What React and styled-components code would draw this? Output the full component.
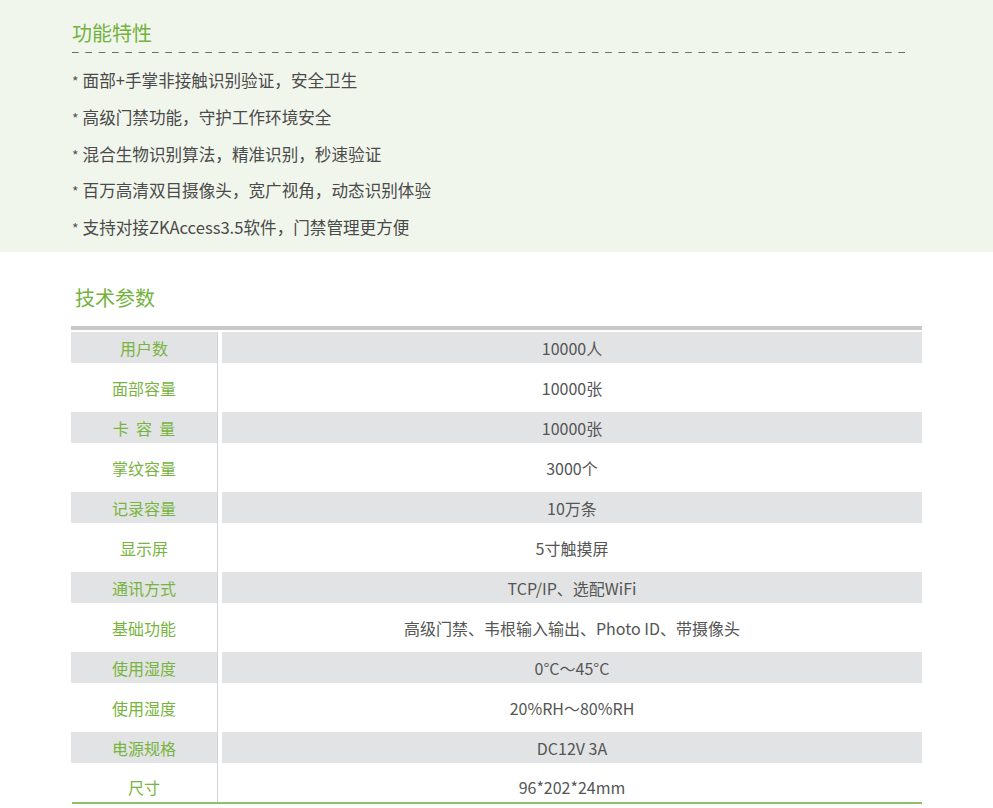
import React from "react";
import styled, { createGlobalStyle } from "styled-components";

const Global = createGlobalStyle`
  html, body { margin: 0; padding: 0; background: #ffffff; }
  body { font-family: "Noto Sans CJK SC", "Noto Sans", sans-serif; }
`;

const Page = styled.div`
  width: 993px;
  min-height: 808px;
  background: #fff;
`;

const Features = styled.section`
  background: #f1f6ec;
  height: 252px;
  box-sizing: border-box;
  padding: 20px 0 0 72px;
`;

const Title = styled.h2`
  margin: 0;
  font-size: 20px;
  line-height: 26px;
  font-weight: 400;
  color: #74b23e;
  padding-left: ${(p) => p.$indent || 0}px;
`;

const Dashed = styled.div`
  width: 835px;
  height: 1px;
  margin: 6px 0 9px;
  background-image: linear-gradient(to right, #555 7px, transparent 7px);
  background-size: 13.33px 1px;
  background-repeat: repeat-x;
  opacity: 0.85;
`;

const List = styled.ul`
  list-style: none;
  margin: 0;
  padding: 0;
`;

const Item = styled.li`
  font-size: 16.6px;
  height: 36.75px;
  line-height: 36.75px;
  color: #4a4a4a;
  white-space: nowrap;
`;

const Star = styled.span`
  font-size: 14px;
  line-height: 1;
  margin-right: 4px;
  color: #555;
`;

const Specs = styled.section`
  padding: 33px 0 0 71px;
`;

const Table = styled.div`
  width: 851px;
  margin-top: 15px;
  border-top: 4px solid #c8c8c8;
  padding-top: 2px;
`;

const Row = styled.div`
  display: grid;
  grid-template-columns: 146px 1px 4px 1fr;
  height: ${(p) => (p.$last ? 30 : 40)}px;
`;

const Cell = styled.div`
  height: ${(p) => (p.$last ? 30 : 31)}px;
  display: flex;
  align-items: center;
  justify-content: center;
  font-size: 16px;
  background: ${(p) => (p.$shade ? "#e2e3e4" : "transparent")};
  white-space: pre;
`;

const Label = styled(Cell)`
  color: #78b43f;
`;

const Value = styled(Cell)`
  grid-column: 4;
  color: #555;
`;

const Divider = styled.div`
  background: #d3d3d3;
  height: 100%;
`;

const BottomLine = styled.div`
  width: 850px;
  margin-left: 1px;
  height: 2px;
  background: #8dc268;
`;

const features = [
  "面部+手掌非接触识别验证，安全卫生",
  "高级门禁功能，守护工作环境安全",
  "混合生物识别算法，精准识别，秒速验证",
  "百万高清双目摄像头，宽广视角，动态识别体验",
  "支持对接ZKAccess3.5软件，门禁管理更方便",
];

const specs = [
  ["用户数", "10000人"],
  ["面部容量", "10000张"],
  ["卡  容  量", "10000张"],
  ["掌纹容量", "3000个"],
  ["记录容量", "10万条"],
  ["显示屏", "5寸触摸屏"],
  ["通讯方式", "TCP/IP、选配WiFi"],
  ["基础功能", "高级门禁、韦根输入输出、Photo ID、带摄像头"],
  ["使用湿度", "0°C～45°C"],
  ["使用湿度", "20%RH～80%RH"],
  ["电源规格", "DC12V 3A"],
  ["尺寸", "96*202*24mm"],
];

export default function App() {
  return (
    <Page>
      <Global />
      <Features>
        <Title>功能特性</Title>
        <Dashed />
        <List>
          {features.map((f) => (
            <Item key={f}>
              <Star>*</Star>
              {f}
            </Item>
          ))}
        </List>
      </Features>
      <Specs>
        <Title $indent={4}>技术参数</Title>
        <Table>
          {specs.map(([k, v], i) => {
            const shade = i % 2 === 0;
            const last = i === specs.length - 1;
            return (
              <Row key={i} $last={last}>
                <Label $shade={shade} $last={last}>{k}</Label>
                <Divider />
                <Value $shade={shade} $last={last}>{v}</Value>
              </Row>
            );
          })}
        </Table>
        <BottomLine />
      </Specs>
    </Page>
  );
}
